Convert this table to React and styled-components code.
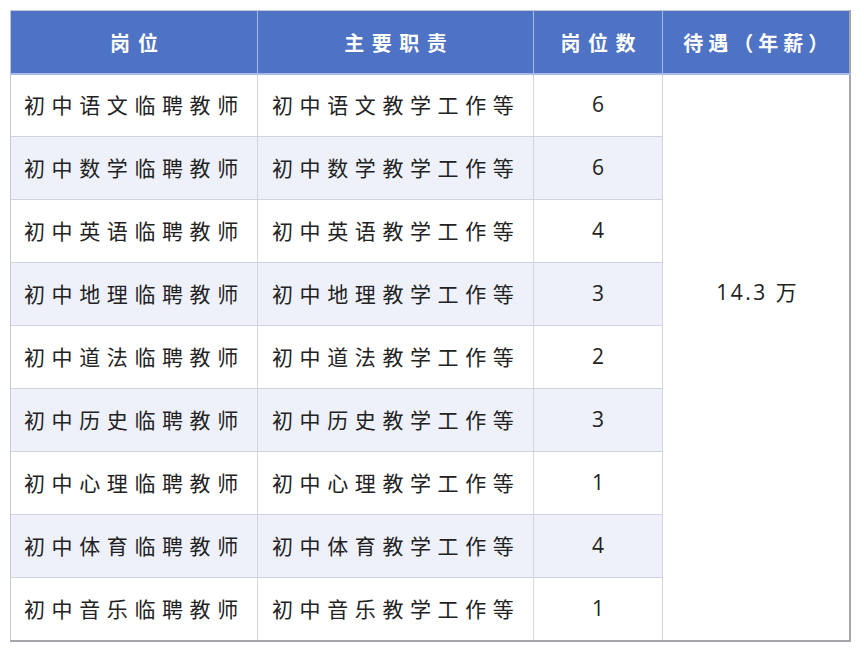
import styled, { createGlobalStyle } from 'styled-components';

const GlobalStyle = createGlobalStyle`
  body {
    margin: 0;
    background: #ffffff;
    font-family: "Noto Sans CJK SC", "Noto Sans", sans-serif;
    color: #222222;
  }
`;

const Page = styled.div`
  padding: 10px 0 0 10px;
`;

const Table = styled.table`
  border-collapse: collapse;
  table-layout: fixed;
  width: 839px;
  border-left: 1px solid #c3c7d1;
  border-top: 1px solid #c3c7d1;
  border-right: 2px solid #a4a6ab;
  border-bottom: 2px solid #a4a6ab;
`;

const HeadRow = styled.tr`
  height: 63px;
  background: #4e72c4;
`;

const HeadCell = styled.th`
  padding: 2px 0 0 ${props => props.$ls}px;
  border-right: 1px solid #a7b8e3;
  border-bottom: 2px solid #a9bbe6;
  color: #ffffff;
  font-size: 20px;
  font-weight: 700;
  letter-spacing: ${props => props.$ls}px;
  text-align: center;
  white-space: nowrap;

  &:last-child {
    border-right: none;
  }
`;

const Row = styled.tr`
  height: 63px;
  background: ${props => (props.$alt ? '#eef1fa' : '#ffffff')};
`;

const Cell = styled.td`
  padding: 0 0 2px ${props => props.$pad}px;
  border-right: 1px solid #d3d6de;
  border-bottom: 1px solid #cfd3dd;
  font-size: 21px;
  letter-spacing: 6.6px;
  white-space: nowrap;
`;

const NumCell = styled.td`
  padding: 0 0 2px;
  border-right: 1px solid #d3d6de;
  border-bottom: 1px solid #cfd3dd;
  font-family: "Open Sans", "Noto Sans", sans-serif;
  font-size: 21px;
  text-align: center;
`;

const PayCell = styled.td`
  padding: 201px 0 0 4px;
  vertical-align: top;
  background: #ffffff;
  font-family: "Open Sans", "Noto Sans CJK SC", sans-serif;
  font-size: 21px;
  letter-spacing: 2.5px;
  text-align: center;
`;

const rows = [
  ['语文', 6],
  ['数学', 6],
  ['英语', 4],
  ['地理', 3],
  ['道法', 2],
  ['历史', 3],
  ['心理', 1],
  ['体育', 4],
  ['音乐', 1],
];

export default function App() {
  return (
    <Page>
      <GlobalStyle />
      <Table>
        <colgroup>
          <col style={{ width: 247 }} />
          <col style={{ width: 276 }} />
          <col style={{ width: 129 }} />
          <col style={{ width: 187 }} />
        </colgroup>
        <thead>
          <HeadRow>
            <HeadCell $ls={8}>岗位</HeadCell>
            <HeadCell $ls={7.5}>主要职责</HeadCell>
            <HeadCell $ls={7.5}>岗位数</HeadCell>
            <HeadCell $ls={5}>待遇（年薪）</HeadCell>
          </HeadRow>
        </thead>
        <tbody>
          {rows.map(([subject, count], i) => (
            <Row key={subject} $alt={i % 2 === 1}>
              <Cell $pad={13}>初中{subject}临聘教师</Cell>
              <Cell $pad={14}>初中{subject}教学工作等</Cell>
              <NumCell>{count}</NumCell>
              {i === 0 && <PayCell rowSpan={rows.length}>14.3 万</PayCell>}
            </Row>
          ))}
        </tbody>
      </Table>
    </Page>
  );
}
